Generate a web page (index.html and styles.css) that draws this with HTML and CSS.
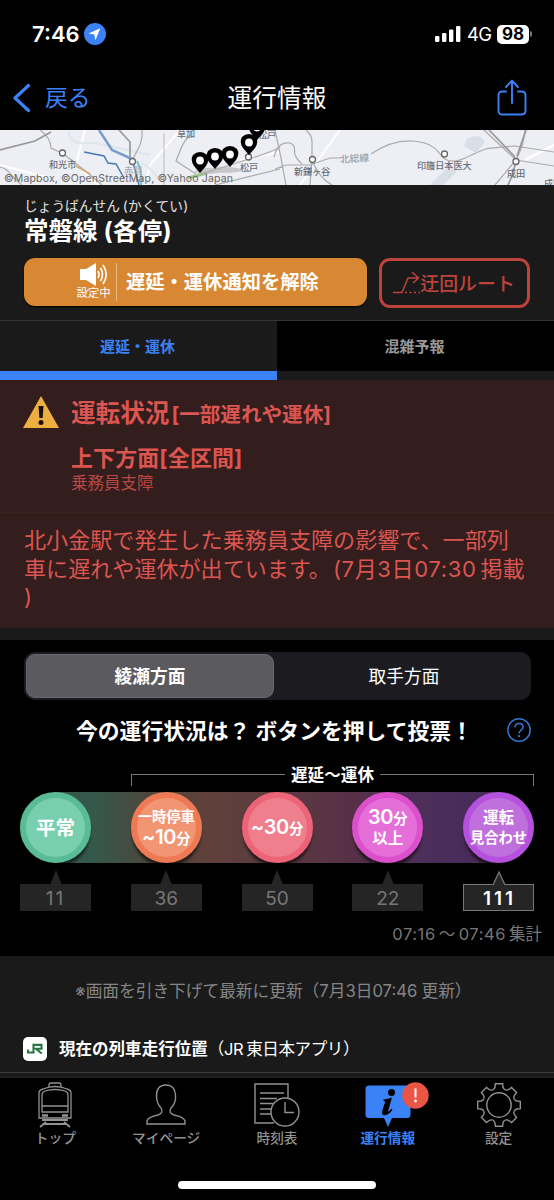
FILE: index.html
```html
<!DOCTYPE html>
<html lang="ja">
<head>
<meta charset="utf-8">
<title>運行情報</title>
<link rel="stylesheet" href="styles.css">
</head>
<body>
<div class="app">
  <div class="status">
    <span class="time">7:46</span>
    <svg class="loc" width="22" height="22" viewBox="0 0 22 22"><circle cx="11" cy="11" r="11" fill="#3b82f7"/><path d="M16.3 5.3 L4.5 10.6 L10.3 11.5 L11.4 17.3Z" fill="#fff"/></svg>
    <span class="grow"></span>
    <svg class="bars" width="26" height="16" viewBox="0 0 26 16" fill="#fff"><rect x="0" y="10" width="4.4" height="6" rx="1.2"/><rect x="7" y="7" width="4.4" height="9" rx="1.2"/><rect x="14" y="3.5" width="4.4" height="12.5" rx="1.2"/><rect x="21" y="0" width="4.4" height="16" rx="1.2"/></svg>
    <span class="net">4G</span>
    <span class="battery">98</span>
    <span class="cap"></span>
  </div>
  <header class="nav">
    <a class="back"><svg width="18" height="30" viewBox="0 0 18 30" fill="none" stroke="#3b82f6" stroke-width="3.2" stroke-linecap="round" stroke-linejoin="round"><path d="M15.5 2.5 L2 15 L15.5 27.5"/></svg><span>戻る</span></a>
    <h1>運行情報</h1>
    <svg class="share" width="30" height="38" viewBox="0 0 30 38" fill="none" stroke="#3b82f6" stroke-width="1.9" stroke-linecap="round" stroke-linejoin="round"><path d="M9 12.5H5A3.5 3.5 0 0 0 1.5 16V32A3.5 3.5 0 0 0 5 35.5H25A3.5 3.5 0 0 0 28.500 32V16A3.5 3.500 0 0 0 25 12.500H21M15 24V1.800M9 8L15 1.600 21 8"/></svg>
  </header>

  <svg class="map" width="554" height="55" viewBox="0 0 554 55">
    <rect width="554" height="55" fill="#eeeff4"/>
    <g fill="none">
      <g stroke="#fff" stroke-width="2"><path d="M0 35L50 48M85 0L76 34 97 55M180 0L150 35 145 55M240 30L280 22M525 30L554 15M340 0L300 55"/></g>
      <path d="M68 2Q72 14 82 13T105 15 150 25M140 32Q155 40 158 50" stroke="#dfe6ee" stroke-width="2.500"/>
      <g stroke="#aaa" stroke-width="1.200">
        <path d="M40 0Q51 8 51 18L62 23M62 23Q85 40 102 55M0 37Q8 39 12 46L22 55M142 0Q143 12 136 23L132 31M190 5Q185 10 182 16L176 31 196 44M205 43Q230 35 252 28T280 17M275 0Q281 26 286 55M215 55L280 39M306 0Q312 5 312 12L312 30 310 55M275 39L286 35H310L330 28H341M371 24Q392 10 412 11T440 24 465 28 486 19 515 16L554 22M312 30Q319 48 332 55M484 0L516 30 554 36M525 0Q524 15 516 30L495 55"/>
        <path d="M274 27Q278 11 290 13C300 17 288 22 302 34"/>
      </g>
      <path d="M0 20L35 11 51 2M119 0L130 12V30M489 0L514 26Q518 34 508 55M526 0L517 26" stroke="#999" stroke-width="1.700"/>
      <path d="M84 22L104 26 108 33 116 34 124 48M133 32L139 55" stroke="#437ab7" stroke-width="1.500"/>
      <path d="M99 0L112 20 132 29" stroke="#799dca" stroke-width="2.500"/>
      <path d="M76 36L90 44" stroke="#d1ad78" stroke-width="2"/><path d="M137 31Q143 44 141 55" stroke="#73c2c5" stroke-width="2"/>
      <path d="M188 48L207 43" stroke="#9bc18e" stroke-width="3"/>
    </g>
    <path d="M164 3V55" stroke="#bbb"/><path d="M467 9Q480 2 485 12L476 23 464 16ZM430 55L449 36 457 42 443 55Z" fill="#d8dfe8"/>
    <g fill="#686d7b" class="map-name">
      <text x="49" y="38">和光市</text><text x="124" y="44" fill="#a5a9b2">赤羽</text><text x="177" y="7">草加</text><text x="240" y="41">松戸</text><text x="258" y="8">松戸</text><text x="294" y="45">新鎌ヶ谷</text><text x="340" y="33" fill="#9a9fa7" font-size="9.800" transform="rotate(-4 340 32)">北総線</text><text x="417" y="39">印旛日本医大</text><text x="507" y="47">成田</text><text x="544" y="57">成田</text>
    </g>
    <g fill="#fff" stroke="#666" stroke-width="1.300"><circle cx="62.500" cy="23" r="3"/><circle cx="132.500" cy="31.500" r="3"/><circle cx="248.500" cy="27" r="3"/><circle cx="312.500" cy="29.500" r="3"/><circle cx="444.500" cy="24" r="3"/><circle cx="516" cy="31.500" r="3"/></g>
    <g fill="#aaa" opacity=".55"><ellipse cx="208" cy="41" rx="13" ry="3"/><ellipse cx="225" cy="40" rx="17" ry="3"/></g>
    <defs><g id="pin"><path d="M0 0L-6-7Q-10-13-7-18Q-4-21 0-21T7-18Q10-13 6-7Z" fill="#000"/><circle cy="-12.500" r="3.900" fill="#fff"/></g></defs>
    <use href="#pin" x="257" y="10"/><use href="#pin" x="249" y="25"/><use href="#pin" x="200" y="43"/><use href="#pin" x="215" y="39"/><use href="#pin" x="230" y="37"/>
    <text class="credit" x="4" y="51.500" textLength="229">©Mapbox, ©OpenStreetMap, ©Yahoo Japan</text>
  </svg>

  <section class="line">
    <p class="kana">じょうばんせん<span>(かくてい)</span></p>
    <h2 class="name">常磐線<span>(各停)</span></h2>
    <div class="actions">
      <button class="notify">
        <span class="sound"><svg width="28" height="23" viewBox="0 0 28 23"><path d="M0 6H6L16 0V23L6 17H0Z" fill="#fff"/><g fill="none" stroke="#fff" stroke-width="1.700"><path d="M18 8Q20 11.500 18 15"/><path d="M20.500 5Q24.500 11.500 20.500 18"/><path d="M23 2Q29.500 11.500 23 21"/></g></svg><small>設定中</small></span>
        <span class="notify-text">遅延・運休通知を解除</span>
      </button>
      <button class="detour"><svg width="27" height="24" viewBox="0 0 27 24" fill="none" stroke="#bd433b" stroke-width="1.500"><path d="M0 21.500H9L15 7H25M19 1L25.500 7 20 12"/><path d="M12 21.500H27" stroke-dasharray="2 2.500"/></svg><span>迂回ルート</span></button>
    </div>
  </section>

  <div class="tabs"><div class="tab on">遅延・運休</div><div class="tab">混雑予報</div></div>

  <section class="alert">
    <div class="alert-head">
      <svg class="warn" width="36" height="32" viewBox="0 0 36 32"><path d="M18 0L36 32H0Z" fill="#efae40"/><path d="M15.500 10H20.500L19.600 22H16.400Z" fill="#17120d"/><circle cx="18" cy="26.500" r="2.500" fill="#17120d"/></svg>
      <div>
        <p class="state">運転状況<span>[一部遅れや運休]</span></p>
        <p class="dir">上下方面[全区間]</p>
        <p class="cause">乗務員支障</p>
      </div>
    </div>
    <p class="detail">北小金駅で発生した乗務員支障の影響で、一部列<br>車に遅れや運休が出ています。<span>(7月3日07:30</span>掲載<br>)</p>
  </section>

  <section class="vote">
    <div class="segment"><span class="seg on">綾瀬方面</span><span class="seg">取手方面</span></div>
    <div class="ask"><span>今の運行状況は？ ボタンを押して投票！</span><svg width="24" height="24" viewBox="0 0 24 24" fill="none" stroke="#3478d3" stroke-width="1.500"><circle cx="12" cy="12" r="11.200"/><path d="M8 9.500Q8 5.500 12 5.500T16 9Q16 11 14 12.300T12 15.500"/><circle cx="12" cy="18.200" r=".5" stroke-width="1.200"/></svg></div>
    <div class="bracket"><i class="left"></i><b>遅延～運休</b><i class="right"></i></div>
    <div class="scale">
      <div class="disc green"><span class="m">平常</span></div>
      <div class="disc orange"><span>一時停車</span><span><em>~10</em>分</span></div>
      <div class="disc pink"><span><em>~30</em>分</span></div>
      <div class="disc magenta"><span><em>30</em>分</span><span class="w">以上</span></div>
      <div class="disc purple"><span class="w">運転</span><span>見合わせ</span></div>
    </div>
    <div class="counts">
      <div class="count"><svg width="14" height="15"><path d="M1 15L7 0 13 15Z" fill="#252525"/></svg><span>11</span></div>
      <div class="count"><svg width="14" height="15"><path d="M1 15L7 0 13 15Z" fill="#252525"/></svg><span>36</span></div>
      <div class="count"><svg width="14" height="15"><path d="M1 15L7 0 13 15Z" fill="#252525"/></svg><span>50</span></div>
      <div class="count"><svg width="14" height="15"><path d="M1 15L7 0 13 15Z" fill="#252525"/></svg><span>22</span></div>
      <div class="count top"><svg width="14" height="15"><path d="M1 15L7 2 13 15" fill="#252525" stroke="#777" stroke-width="1.300"/></svg><span>111</span></div>
    </div>
    <p class="period">07:16<span>～</span>07:46<span class="sum">集計</span></p>
  </section>

  <section class="foot">
    <p class="refresh">※画面を引き下げて最新に更新（7月3日07:46<span>更新）</span></p>
    <div class="jr-row"><span class="jr-logo"><svg width="24" height="24" viewBox="0 0 24 24" fill="none" stroke="#277642" stroke-width="2.100"><path d="M5 12.500V15.500H10.500V7.900H18.500V11.800H13L18.700 16.500"/></svg></span><p><b>現在の列車走行位置</b><span class="app-name">（JR<span>東日本アプリ）</span></span></p></div>
  </section>

  <nav class="bottom">
    <a class="item"><svg width="46" height="46" viewBox="0 0 46 46" fill="none" stroke="#929292" stroke-width="1.300"><path d="M17 5V3Q17 1 19 1H27Q29 1 29 3V5"/><path d="M7 36V11Q7 8 11 7Q23 2 35 7Q39 8 39 11V36ZM10 30V13Q10 10 13 9Q23 6 33 9Q36 10 36 13V30ZM10 24H36"/><path d="M10 33.500H16M30 33.500H36" stroke-width="2.500"/><path d="M10 38H36M14 40L8 45M32 40L38 45M13 42H33" stroke-width="1.800"/></svg><span>トップ</span></a>
    <a class="item"><svg width="46" height="46" viewBox="0 0 46 46" fill="none" stroke="#929292" stroke-width="1.400"><path d="M23 3C16 3 13 8 13.500 15C14 22 16 24 18 26Q21 31 15 33Q5 35 4 39V42H42V39Q41 35 31 33Q25 31 28 26C31 23 33 18 32.500 13C32 6 29 3 23 3Z"/></svg><span>マイページ</span></a>
    <a class="item"><svg width="46" height="46" viewBox="0 0 46 46" fill="none" stroke="#929292" stroke-width="1.400"><path d="M20 41H1V2H34V16M6 11H30M6 16.500H23M6 21.500H19M6 27H17M6 32H17"/><circle cx="31" cy="30" r="14"/><path d="M31 20V30.500H40"/></svg><span>時刻表</span></a>
    <a class="item on"><svg width="46" height="46" viewBox="0 0 46 46"><path d="M4 3.500H42Q45.500 3.500 45.500 7V32.500Q45.500 36 42 36H27L23 45 19 36H4Q.500 36 .500 32.500V7Q.500 3.500 4 3.500Z" fill="#3b82f6"/><circle cx="26.500" cy="10.500" r="3.500" fill="#000"/><path d="M18.500 17.500Q23 17.200 27 15.500L23 29.500Q24.500 29.500 26.500 26.800L27.500 27.800Q23.500 33.500 19.500 33.200C16 33 17 29.500 17.700 27.500L20 20.300Q20.500 19 18.500 18.800Z" fill="#000"/></svg><span>運行情報</span><i class="badge"><svg width="27" height="27" viewBox="0 0 27 27"><circle cx="13.500" cy="13.500" r="13.200" fill="#ea5545"/><path d="M13.500 6.500V15.500" stroke="#fff" stroke-width="2"/><circle cx="13.500" cy="19" r="1.400" fill="#fff"/></svg></i></a>
    <a class="item"><svg width="46" height="46" viewBox="-23 -23 46 46" fill="none" stroke="#929292" stroke-width="1.400"><defs><path id="tooth" d="M-6.300-15.200Q-4.500-15.800-4-18L-3.600-21.300H3.600L4-18Q4.500-15.800 6.300-15.200"/></defs><use href="#tooth"/><use href="#tooth" transform="rotate(45)"/><use href="#tooth" transform="rotate(90)"/><use href="#tooth" transform="rotate(135)"/><use href="#tooth" transform="rotate(180)"/><use href="#tooth" transform="rotate(225)"/><use href="#tooth" transform="rotate(270)"/><use href="#tooth" transform="rotate(315)"/><circle r="12.200"/></svg><span>設定</span></a>
  </nav>
  <div class="home"></div>
</div>
</body>
</html>
```
FILE: styles.css
```css
* { box-sizing: border-box; margin: 0; padding: 0; }
body { background: #000; color: #fff; font-family: Inter, "Noto Sans CJK JP", sans-serif; }
p, h1, h2, span, b { white-space: nowrap; }
em, i { font-style: normal; }
button { border: 0; font: inherit; color: inherit; }
svg { display: block; flex: none; }
.app { width: 554px; height: 1200px; overflow: hidden; display: flex; flex-direction: column; }
.app > * { flex: none; }

.status { height: 68px; display: flex; align-items: center; padding: 0 22px 0 32px; }
.time { width: 52px; font-size: 22px; font-weight: 600; letter-spacing: 0; line-height: 30px; }
.grow { flex: 1; }
.net { margin-left: 6px; width: 30px; font-size: 18.500px; letter-spacing: -.8px; }
.battery { width: 32px; height: 19px; border-radius: 5px; background: #fff; color: #000; font-size: 17px; font-weight: 700; line-height: 19px; text-align: center; }
.cap { width: 2px; height: 6px; margin-left: 1px; border-radius: 0 2px 2px 0; background: #777; }

.nav { height: 62px; display: grid; grid-template-columns: 1fr auto 1fr; align-items: center; padding: 0 27px 2px 13px; }
.back { display: flex; align-items: center; gap: 14px; color: #3b82f6; font-size: 22.800px; line-height: 30px; }
.nav h1 { font-size: 24.700px; font-weight: 400; line-height: 36px; padding-left: 14px; }
.share { justify-self: end; }

.map-name { font-family: "Noto Sans CJK JP", sans-serif; font-size: 9.100px; font-weight: 500; }
.credit { font: 10.500px Inter, sans-serif; fill: #666; }

.line { height: 136px; background: #1a1a1a; border-bottom: 1px solid #343434; padding: 11px 24px 0; }
.kana { font-size: 13.700px; line-height: 20px; color: #e2e2e2; }
.kana span { margin-left: 3px; letter-spacing: .2px; }
.name { font-size: 24.500px; line-height: 32px; font-weight: 700; margin-top: -1px; }
.name span { margin-left: 6px; font-size: 24.300px; letter-spacing: .4px; }
.actions { display: flex; align-items: flex-start; gap: 12px; padding-top: 11px; }
.notify { width: 344px; height: 48px; border-radius: 11px; background: #d88832; box-shadow: 0 1px 2px #000; display: flex; align-items: center; padding-left: 53px; }
.sound { display: flex; flex-direction: column; align-items: center; height: 38px; width: 40px; padding-right: 6px; border-right: 1px solid #e8b982; }
.sound small { font-size: 11.400px; line-height: 15px; }
.notify-text { margin-left: 9px; font-size: 19.300px; font-weight: 700; line-height: 28px; }
.detour { width: 151px; height: 50px; border: 3px solid #bd433b; border-radius: 11px; background: transparent; color: #bd433b; display: flex; align-items: center; padding-left: 11px; font-size: 18.900px; font-weight: 500; }
.detour span { margin-top: -1px; }

.tabs { height: 59px; display: grid; grid-template-columns: 277px 277px; grid-template-rows: 59px; }
.tab { background: #000; border-bottom: 9px solid #1a1a1a; padding-right: 2px; text-align: center; font-size: 15px; line-height: 51px; font-weight: 700; color: #999; }
.tab.on { background: #1a1a1a; border-color: #3b82f6; color: #3b82f6; }

.alert { height: 248px; background: #331d1d; color: #dc5550; }
.alert-head { height: 133px; border-bottom: 1px solid #402020; padding: 15px 23px 0; display: flex; gap: 12px; }
.warn { margin-top: 1px; }
.state { font-size: 24.600px; line-height: 36px; font-weight: 700; }
.state span { font-size: 20.600px; margin-left: 2px; }
.dir { font-size: 21.900px; line-height: 30px; font-weight: 700; margin-top: 10px; letter-spacing: .2px; }
.cause { font-size: 16.500px; line-height: 20px; color: #b94844; }
.detail { padding: 13px 24px 0; font-size: 22.080px; line-height: 28.500px; }
.detail span { letter-spacing: .6px; margin: 0 4px 0 2px; }

.vote { height: 328px; border-top: 12px solid #1a1a1a; padding-top: 12px; }
.segment { width: 507px; height: 48px; margin-left: 24px; padding: 2px; border-radius: 11px; background: #1c1b20; display: grid; grid-template-columns: 248px 1fr; }
.seg { line-height: 45px; font-size: 17.700px; text-align: center; padding-left: 5px; }
.seg.on { background: #5b5a5f; border: 1px solid #68676c; border-radius: 9px; font-weight: 700; line-height: 43px; padding-left: 0; height: 44px; }
.ask { height: 64px; display: flex; align-items: center; justify-content: space-between; padding: 0 23px 4px 76px; font-size: 21.800px; font-weight: 700; }
.ask span { margin-top: -2px; }
.bracket { height: 24px; margin: -2px 20px 0 131px; display: flex; align-items: center; justify-content: space-between; font-size: 16.600px; }
.bracket i { width: 154px; height: 12px; align-self: flex-end; border-top: 1px solid #777; }
.bracket .left { border-left: 1px solid #777; }
.bracket .right { border-right: 1px solid #777; }

.scale { height: 71px; margin: 6px 20px 0; display: flex; justify-content: space-between; background: linear-gradient(90deg, #35584c 8%, #4d4639 22%, #60403a 34%, #5c3b40 50%, #573047 67%, #50305a 78%, #492b5a 94%) center / 440px 71px no-repeat; }
.disc { width: 71px; height: 71px; border: 6px solid; border-radius: 50%; box-shadow: 0 5px 3px -1px #0009; display: flex; flex-direction: column; align-items: center; justify-content: center; font-size: 14.300px; font-weight: 700; line-height: 20px; }
.disc span { display: block; }
.disc em { font-size: 20px; font-weight: 600; letter-spacing: -.3px; }
.disc .m { font-size: 19.500px; }
.disc .w { font-size: 15.500px; }
.green { background: #78cfb0; border-color: #5abb97; }
.orange { background: #f29573; border-color: #ee7955; }
.pink { background: #f07f8e; border-color: #ed6478; }
.magenta { background: #e66ed9; border-color: #dc51cb; }
.purple { background: #c070dc; border-color: #b551dd; }
.counts { display: flex; justify-content: space-between; margin: 7px 20px 0; }
.count { width: 71px; display: flex; flex-direction: column; align-items: center; }
.count span { width: 71px; height: 27px; margin-top: -1px; background: #252525; color: #777; font-size: 19px; line-height: 29px; text-align: center; }
.count:first-child span { letter-spacing: 2px; }
.count.top span { border: 1px solid #777; color: #fff; font-weight: 600; line-height: 27px; letter-spacing: 3px; padding-left: 2px; }
.top svg { position: relative; z-index: 1; }
.period { margin: 12px 12px 0 0; text-align: right; font-size: 16.500px; line-height: 22px; color: #777; letter-spacing: .55px; }
.period span { margin: 0 3px; }
.period .sum { margin-right: 0; letter-spacing: 0; }

.foot { height: 122px; background: #1a1a1a; padding-top: 23px; border-bottom: 1px solid #242424; }
.refresh { padding-left: 75px; font-size: 16.700px; line-height: 24px; color: #858585; }
.refresh span { margin-left: 4px; }
.jr-row { height: 70px; border-bottom: 1px solid #3d3d3d; display: flex; align-items: center; gap: 12px; padding: 22px 0 0 23px; font-size: 16.550px; line-height: 24px; }
.jr-logo { width: 24px; height: 24px; border-radius: 5px; background: #fff; }
.app-name { letter-spacing: -.4px; }
.app-name > span { margin-left: 3px; }

.bottom { height: 103px; display: grid; grid-template-columns: repeat(5, 110.800px); padding: 4px 0 0; }
.item { position: relative; display: flex; flex-direction: column; align-items: center; color: #929292; font-size: 13.700px; line-height: 21px; font-weight: 500; }
.item.on { color: #3b82f6; font-weight: 700; }
.badge { position: absolute; left: 70px; top: 0; }
.home { width: 198px; height: 8px; border-radius: 4px; background: #fff; margin: 0 auto; }
```
